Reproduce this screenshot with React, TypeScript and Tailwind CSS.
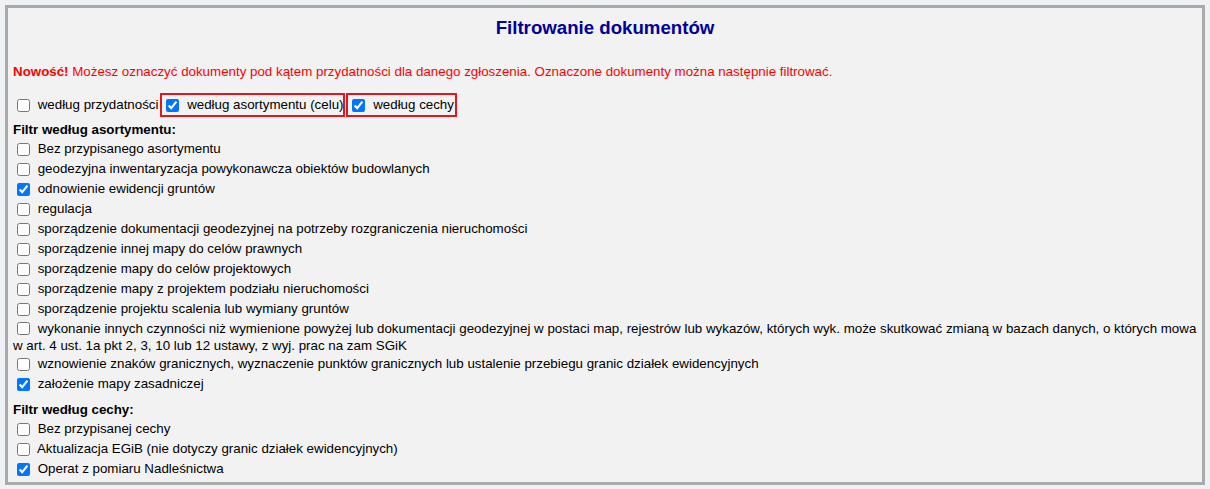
import React from "react";

const assortment: [string, boolean][] = [
  ["Bez przypisanego asortymentu", false],
  ["geodezyjna inwentaryzacja powykonawcza obiektów budowlanych", false],
  ["odnowienie ewidencji gruntów", true],
  ["regulacja", false],
  ["sporządzenie dokumentacji geodezyjnej na potrzeby rozgraniczenia nieruchomości", false],
  ["sporządzenie innej mapy do celów prawnych", false],
  ["sporządzenie mapy do celów projektowych", false],
  ["sporządzenie mapy z projektem podziału nieruchomości", false],
  ["sporządzenie projektu scalenia lub wymiany gruntów", false],
];

const assortmentTail: [string, boolean][] = [
  [
    "wznowienie znaków granicznych, wyznaczenie punktów granicznych lub ustalenie przebiegu granic działek ewidencyjnych",
    false,
  ],
  ["założenie mapy zasadniczej", true],
];

const features: [string, boolean][] = [
  ["Bez przypisanej cechy", false],
  ["Aktualizacja EGiB (nie dotyczy granic działek ewidencyjnych)", false],
  ["Operat z pomiaru Nadleśnictwa", true],
];

function Box({ checked }: { checked: boolean }) {
  return (
    <input
      type="checkbox"
      defaultChecked={checked}
      className="m-[3px_4px_3px_4px] h-[13px] w-[13px] shrink-0 align-[-2px]"
    />
  );
}

function Row({ text, checked }: { text: string; checked: boolean }) {
  return (
    <label className="flex h-[20px] items-center whitespace-pre">
      <Box checked={checked} />
      {" " + text}
    </label>
  );
}

export default function App() {
  return (
    <div className="min-h-screen bg-[#eef2f5] p-[5px] font-['Liberation_Sans',Arial,sans-serif] text-[13.33px] leading-[16px] text-black">
      <div className="border-[3px] border-[#aaaaaa] bg-[#f2f2f2] px-[5px] pb-[3px]">
        <h2 className="mt-[8px] text-center text-[18.67px] font-bold leading-[23px] text-[#00009c]">
          Filtrowanie dokumentów
        </h2>
        <p className="mt-[25px] text-[#ff0000]">
          <b>Nowość!</b> Możesz oznaczyć dokumenty pod kątem przydatności dla danego zgłoszenia. Oznaczone
          dokumenty można następnie filtrować.
        </p>

        {/* top-level filter switches; the active ones are framed in red */}
        <div className="mt-[13px] flex h-[24px] items-center whitespace-pre">
          <label className="flex items-center">
            <Box checked={false} />
            {" według przydatności"}
          </label>
          <label className="ml-[2px] flex h-[24px] items-center border-2 border-[#e3151f]">
            <Box checked={true} />
            {" według asortymentu (celu)"}
          </label>
          <label className="ml-[1px] flex h-[24px] items-center border-2 border-[#e3151f] pr-[1px]">
            <Box checked={true} />
            {" według cechy"}
          </label>
        </div>

        <div className="mt-[5px] font-bold">Filtr według asortymentu:</div>
        <div className="mt-[1px]">
          {assortment.map(([t, c]) => (
            <Row key={t} text={t} checked={c} />
          ))}
          <label className="block">
            <Box checked={false} /> wykonanie innych czynności niż wymienione powyżej lub dokumentacji geodezyjnej w
            postaci map, rejestrów lub wykazów, których wyk. może skutkować zmianą w bazach danych, o których mowa w
            art. 4 ust. 1a pkt 2, 3, 10 lub 12 ustawy, z wyj. prac na zam SGiK
          </label>
          {assortmentTail.map(([t, c]) => (
            <Row key={t} text={t} checked={c} />
          ))}
        </div>

        <div className="mt-[8px] font-bold">Filtr według cechy:</div>
        <div className="mt-[1px]">
          {features.map(([t, c]) => (
            <Row key={t} text={t} checked={c} />
          ))}
        </div>
      </div>
    </div>
  );
}
